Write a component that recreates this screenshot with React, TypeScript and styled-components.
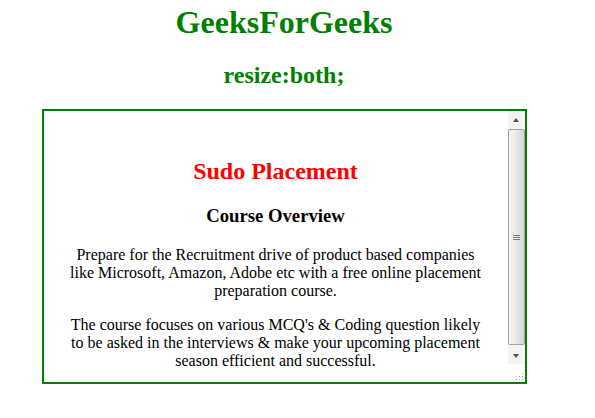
import * as React from 'react';
import styled, { createGlobalStyle } from 'styled-components';

const GlobalStyle = createGlobalStyle`
    body {
        margin: 0;
        background: #ffffff;
        font-family: "Liberation Serif", "Times New Roman", serif;
    }
`;

const Page = styled.div`
    width: 568px;
    text-align: center;
`;

const Title = styled.h1`
    margin: 4px 0 21.44px;
    font-size: 32px;
    color: green;
`;

const Subtitle = styled.h2`
    margin: 0 0 19.92px;
    font-size: 24px;
    color: green;
`;

const ResizeBox = styled.div`
    box-sizing: border-box;
    width: 485px;
    height: 275px;
    margin: 0 auto;
    border: 2px solid green;
    display: flex;
    overflow: hidden;
`;

const Content = styled.div`
    flex: 1;
    min-width: 0;
    padding: 27px 22px 0;
    overflow: hidden;
`;

// the headless browser hides real scrollbars, so the classic one is drawn here
const ScrollBar = styled.div`
    width: 17px;
    flex: none;
    display: flex;
    flex-direction: column;
    background: #f3f3f3;
`;

const ArrowButton = styled.div`
    height: 17px;
    display: flex;
    align-items: center;
    justify-content: center;
    background: #f3f3f3;
`;

const Arrow = styled.span<{ $down?: boolean }>`
    width: 0;
    height: 0;
    border-left: 3.5px solid transparent;
    border-right: 3.5px solid transparent;
    ${(p) => (p.$down ? 'border-top: 4px solid #505050;' : 'border-bottom: 4px solid #505050;')}
`;

const Track = styled.div`
    flex: 1;
    display: flex;
    flex-direction: column;
`;

const Thumb = styled.div`
    box-sizing: border-box;
    height: 216px;
    margin: 1px 0 0;
    border: 1px solid #a3a3a3;
    border-radius: 2px;
    background: linear-gradient(to right, #f6f6f6, #e6e6e6 55%, #d4d4d4);
    display: flex;
    align-items: center;
    justify-content: center;
`;

const Grip = styled.span`
    width: 7px;
    height: 5px;
    background: repeating-linear-gradient(#7a7a7a 0 1px, transparent 1px 2px);
`;

const dot = (right: number, bottom: number) =>
    `linear-gradient(#9a9a9a, #9a9a9a) right ${right}px bottom ${bottom}px / 1px 1px no-repeat`;

const Resizer = styled.div`
    height: 18px;
    background: ${dot(2, 2)}, ${dot(5, 2)}, ${dot(8, 2)}, ${dot(2, 5)}, ${dot(5, 5)}, ${dot(2, 8)}, #ffffff;
`;

const CourseName = styled.h2`
    margin: 19.92px 0;
    font-size: 24px;
    color: red;
`;

const Heading = styled.h3`
    margin: 18.72px 0;
    font-size: 18.72px;
    color: #000;
`;

const Text = styled.p`
    margin: 16px 0;
    font-size: 16px;
    color: #000;
`;

function App(): JSX.Element {
    return (
        <Page>
            <GlobalStyle />
            <Title>GeeksForGeeks</Title>
            <Subtitle>resize:both;</Subtitle>
            <ResizeBox>
                <Content>
                    <CourseName>Sudo Placement</CourseName>
                    <Heading>Course Overview</Heading>
                    <Text>
                        Prepare for the Recruitment drive of product based companies like Microsoft, Amazon, Adobe
                        etc with a free online placement preparation course.
                    </Text>
                    <Text>
                        The course focuses on various MCQ's &amp; Coding question likely to be asked in the
                        interviews &amp; make your upcoming placement season efficient and successful.
                    </Text>
                </Content>
                <ScrollBar>
                    <ArrowButton>
                        <Arrow />
                    </ArrowButton>
                    <Track>
                        <Thumb>
                            <Grip />
                        </Thumb>
                    </Track>
                    <ArrowButton>
                        <Arrow $down />
                    </ArrowButton>
                    <Resizer />
                </ScrollBar>
            </ResizeBox>
        </Page>
    );
}

export default App;
